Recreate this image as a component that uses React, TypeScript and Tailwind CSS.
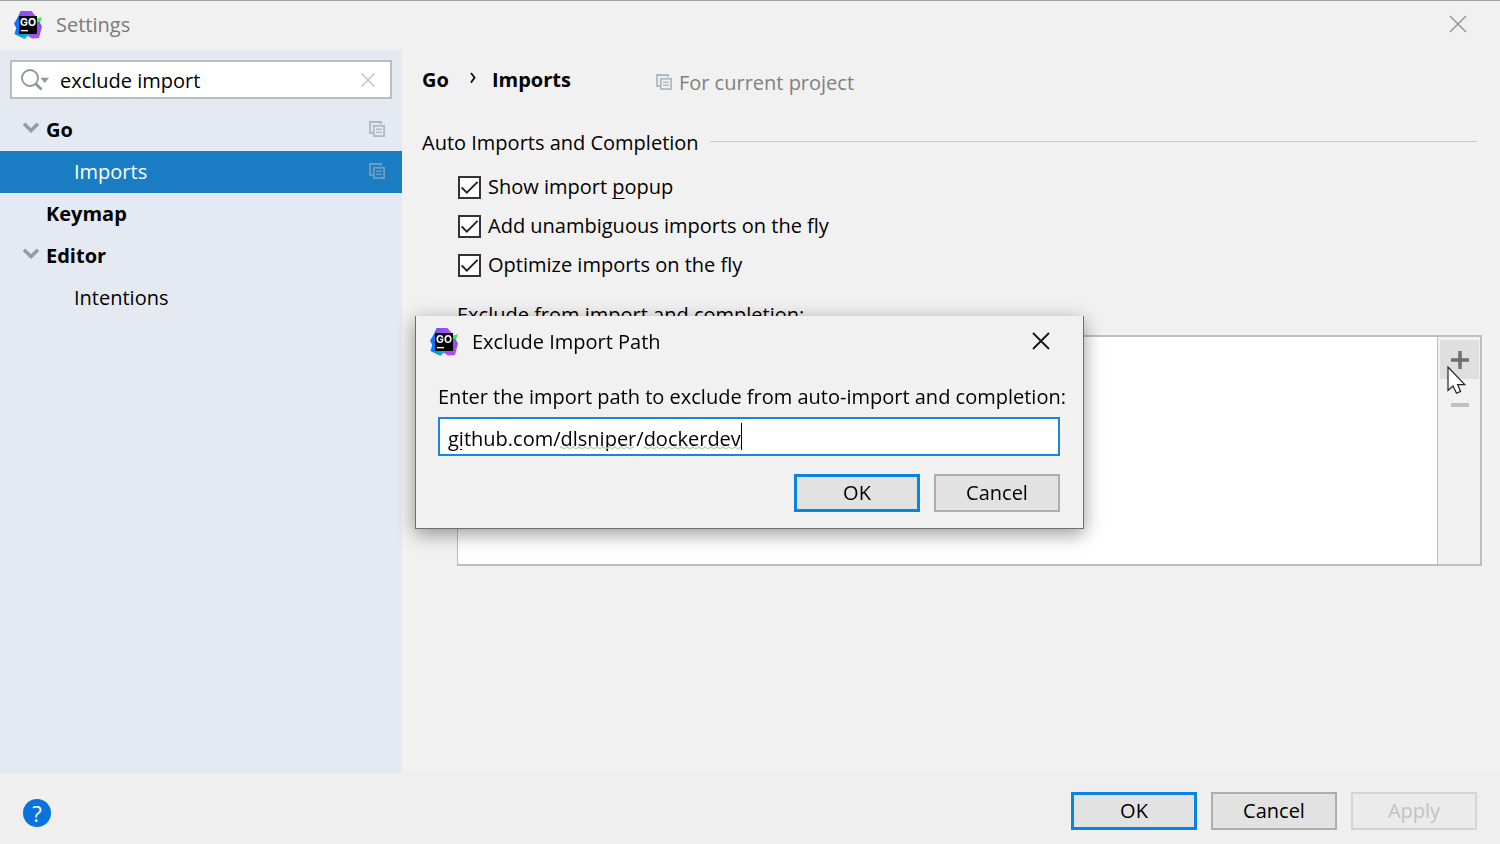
import { useState } from "react";
import type { ReactNode } from "react";

function GoLandLogo({ id }: { id: string }) {
  return (
    <svg width="28" height="28" viewBox="0 0 28 28" aria-hidden="true" className="shrink-0">
      <defs>
        <linearGradient id={`${id}-violet`} x1="0" y1="0" x2="1" y2="0.3">
          <stop offset="0" stopColor="#3b6bf5" />
          <stop offset="0.45" stopColor="#9a4bf8" />
          <stop offset="1" stopColor="#b94af5" />
        </linearGradient>
        <linearGradient id={`${id}-blue`} x1="0" y1="0" x2="0.8" y2="1">
          <stop offset="0" stopColor="#1b6cf8" />
          <stop offset="0.5" stopColor="#087cfa" />
          <stop offset="1" stopColor="#18c2b4" />
        </linearGradient>
        <linearGradient id={`${id}-right`} x1="0.5" y1="0" x2="0.5" y2="1">
          <stop offset="0" stopColor="#7a5ad8" />
          <stop offset="1" stopColor="#b74af7" />
        </linearGradient>
      </defs>
      <path d="M3 8 6.5 0H17.5L22 5.5 23 14 8 15Z" fill={`url(#${id}-violet)`} />
      <path d="M20 8.5 28 6 25.5 13 21 16Z" fill="#3bea62" />
      <path d="M22 11 25.5 11 28 15.5 25 27 18 27.5 11 23Z" fill={`url(#${id}-right)`} />
      <path d="M4 6 0 12.5 2.2 17 0.5 23 10.5 28 17 22 12 8Z" fill={`url(#${id}-blue)`} />
      <rect x="5" y="5" width="18" height="18" fill="#050505" />
      <rect x="7" y="19" width="7" height="1.3" fill="#fff" />
      <text x="6" y="14.8" fill="#fff" fontSize="10.5" fontWeight="700" fontFamily="Inter, sans-serif">
        GO
      </text>
    </svg>
  );
}

function ProjectIcon({ color }: { color: string }) {
  return (
    <svg width="16" height="16" viewBox="0 0 16 16" fill="none" stroke={color} aria-hidden="true" className="shrink-0">
      <path d="M12 3V1H1V12H4" strokeWidth="1.8" />
      <rect x="4.8" y="4.8" width="10.3" height="10.3" strokeWidth="1.8" />
      <path d="M7 8.3H12.8M7 11.3H12.8" strokeWidth="1.5" />
    </svg>
  );
}

function CloseIcon({ size, color, width }: { size: number; color: string; width: number }) {
  return (
    <svg width={size} height={size} viewBox="0 0 18 18" fill="none" stroke={color} strokeWidth={width} aria-hidden="true">
      <path d="M1 1 17 17M17 1 1 17" />
    </svg>
  );
}

function Chevron() {
  return (
    <svg width="16" height="12" viewBox="0 0 16 12" fill="none" stroke="#989ca0" strokeWidth="3.6" aria-hidden="true">
      <path d="M1 1.8 8 8.6 15 1.8" />
    </svg>
  );
}

function TreeRow({
  label,
  group = false,
  open = false,
  selected = false,
  project = false,
}: {
  label: string;
  group?: boolean;
  open?: boolean;
  selected?: boolean;
  project?: boolean;
}) {
  return (
    <li>
      <button
        type="button"
        className={`flex h-[42px] w-full items-center pr-[17px] text-left ${selected ? "bg-[#1a7dc4] text-white" : "text-black"}`}
      >
        <span className={`flex shrink-0 items-center pb-1 pl-[23px] ${group ? "w-[46px]" : "w-[74px]"}`}>
          {open && <Chevron />}
        </span>
        <span className={`flex-1 ${group ? "font-bold" : ""}`}>{label}</span>
        {project && (
          <span className="pb-[2px]">
            <ProjectIcon color={selected ? "#6f9fc0" : "#b0bac4"} />
          </span>
        )}
      </button>
    </li>
  );
}

function CheckRow({ id, children }: { id: string; children: ReactNode }) {
  const [checked, setChecked] = useState(true);
  return (
    <div className="flex h-7 items-center gap-[7px]">
      <span className="relative flex">
        <input
          id={id}
          type="checkbox"
          checked={checked}
          onChange={(e) => setChecked(e.target.checked)}
          className="size-[23px] appearance-none border-2 border-[#333] bg-white"
        />
        {checked && (
          <svg
            width="23"
            height="23"
            viewBox="0 0 23 23"
            fill="none"
            stroke="#222"
            strokeWidth="1.9"
            aria-hidden="true"
            className="pointer-events-none absolute inset-0"
          >
            <path d="M3.6 11.4 8.8 16.6 19.6 5.8" />
          </svg>
        )}
      </span>
      <label htmlFor={id}>{children}</label>
    </div>
  );
}

function DialogButton({ label, kind = "normal" }: { label: string; kind?: "primary" | "normal" | "disabled" }) {
  const styles = {
    primary: "border-[3px] border-[#0a84e2] bg-[#e2e2e2] text-black",
    normal: "border-2 border-[#adadad] bg-[#e2e2e2] text-black",
    disabled: "border-2 border-[#d4d4d4] bg-[#ebebeb] text-[#c2c2c2]",
  };
  return (
    <button
      type="button"
      disabled={kind === "disabled"}
      className={`flex h-[38px] w-[126px] items-center justify-center ${styles[kind]}`}
    >
      {label}
    </button>
  );
}

function ExcludeDialog() {
  return (
    <div className="fixed inset-0 flex items-center justify-center pt-px pr-px">
      <div
        role="dialog"
        aria-labelledby="exclude-title"
        className="w-[669px] border border-t-0 border-[#6e6e6e] bg-[#f1f1f1] pb-4 shadow-[0_5px_18px_rgba(0,0,0,0.4)]"
      >
        <div className="flex h-[52px] items-center gap-[14px] pr-[33px] pl-[14px]">
          <GoLandLogo id="dialog-logo" />
          <h2 id="exclude-title" className="flex-1">
            Exclude Import Path
          </h2>
          <button type="button" aria-label="Close dialog" className="pb-[2px]">
            <CloseIcon size={18} color="#111" width={1.8} />
          </button>
        </div>
        <div className="pt-[15px] pr-[23px] pl-[22px]">
          <label htmlFor="import-path" className="block h-[30px] whitespace-nowrap">
            Enter the import path to exclude from auto-import and completion:
          </label>
          <div className="relative mt-1 flex">
            <input
              id="import-path"
              type="text"
              spellCheck={false}
              defaultValue="github.com/dlsniper/dockerdev"
              className="h-[39px] w-full border-2 border-[#1a85dc] bg-white px-2 pt-1 outline-none"
            />
            <svg
              width="310"
              height="39"
              viewBox="0 0 310 39"
              fill="none"
              aria-hidden="true"
              className="pointer-events-none absolute top-0 left-0"
            >
              <defs>
                <pattern id="typo-wave" width="6" height="4" patternUnits="userSpaceOnUse" x="0" y="29">
                  <path d="M0 3 3 0.8 6 3" stroke="#b5d6b0" strokeWidth="1.2" fill="none" />
                </pattern>
              </defs>
              <rect x="122" y="29" width="74" height="4" fill="url(#typo-wave)" />
              <rect x="205" y="29" width="98" height="4" fill="url(#typo-wave)" />
              <rect x="22" y="32" width="2" height="1" fill="#000" />
              <rect x="303" y="6" width="1" height="27" fill="#000" />
            </svg>
          </div>
          <div className="mt-[18px] flex justify-end gap-[14px]">
            <DialogButton label="OK" kind="primary" />
            <DialogButton label="Cancel" />
          </div>
        </div>
      </div>
    </div>
  );
}

export default function App() {
  return (
    <div className="flex min-h-screen flex-col border-t border-[#a0a0a0] bg-[#f1f1f1] font-['Open_Sans','Noto_Sans',sans-serif] text-[20px] leading-[28px] text-black">
      <header className="flex h-[49px] shrink-0 items-center gap-[14px] pr-[33px] pb-px pl-[14px]">
        <GoLandLogo id="window-logo" />
        <h1 className="flex-1 text-[#7a7a7a]">Settings</h1>
        <button type="button" aria-label="Close settings" className="pb-[2px]">
          <CloseIcon size={18} color="#999" width={1.6} />
        </button>
      </header>

      <div className="flex flex-1">
        <nav className="w-[402px] shrink-0 bg-[#e5eaf2]" aria-label="Settings categories">
          <div className="px-[10px] pt-[10px] pb-[10px]">
            <div className="flex h-[39px] items-center border-2 border-[#bcbebd] bg-white pr-[15px] pl-2">
              <svg width="30" height="24" viewBox="0 0 30 24" fill="none" aria-hidden="true" className="shrink-0">
                <circle cx="10" cy="10" r="8" stroke="#8a959c" strokeWidth="1.8" />
                <path d="M15.5 15.5 21.5 21.5" stroke="#8a959c" strokeWidth="2.6" />
                <path d="M20.5 9.8H29L24.7 15Z" fill="#8a959c" />
              </svg>
              <input
                type="text"
                aria-label="Search settings"
                defaultValue="exclude import"
                className="min-w-0 flex-1 bg-transparent pt-[2px] pl-[10px] outline-none"
              />
              <button type="button" aria-label="Clear search">
                <CloseIcon size={14} color="#c0c4c7" width={2} />
              </button>
            </div>
          </div>
          <ul>
            <TreeRow label="Go" group open project />
            <TreeRow label="Imports" selected project />
            <TreeRow label="Keymap" group />
            <TreeRow label="Editor" group open />
            <TreeRow label="Intentions" />
          </ul>
        </nav>

        <main className="min-w-0 flex-1 pt-[10px] pr-[18px] pl-5">
          <div className="flex h-10 items-center font-bold">
            <span>Go</span>
            <svg width="6" height="12" viewBox="0 0 6 12" fill="none" stroke="#111" strokeWidth="1.8" aria-hidden="true" className="mr-4 mb-1 ml-[21px]">
              <path d="M1 1 4.6 5.6 1 10.6" />
            </svg>
            <span>Imports</span>
            <span className="ml-[85px] flex items-center gap-[7px] pt-[6px] font-normal text-[#808080]">
              <span className="pb-[2px]">
                <ProjectIcon color="#b0bac0" />
              </span>
              For current project
            </span>
          </div>

          <section>
            <div className="mt-7 flex h-[30px] items-center gap-[11px] pr-[5px]">
              <h2>Auto Imports and Completion</h2>
              <hr className="mb-[3px] flex-1 border-[#cacaca]" />
            </div>
            <div className="mt-[15px] flex flex-col gap-[11px] pl-9">
              <CheckRow id="show-popup">
                Show import <span className="underline decoration-1 underline-offset-4 [text-decoration-skip-ink:none]">p</span>opup
              </CheckRow>
              <CheckRow id="add-unambiguous">Add unambiguous imports on the fly</CheckRow>
              <CheckRow id="optimize">Optimize imports on the fly</CheckRow>
            </div>
            <div className="mt-[22px] pl-[35px]">
              <h3 className="h-[30px]">Exclude from import and completion:</h3>
              <div className="mt-1 flex h-[231px] border-2 border-l border-[#bebebe] bg-white">
                <div className="flex-1" />
                <div className="flex w-[43px] flex-col items-center border-l border-[#bebebe] bg-[#f1f1f1] pt-[3px]">
                  <button type="button" aria-label="Add path" className="relative flex size-[39px] items-center justify-center bg-[#dfdfdf] pl-px">
                    <svg width="18" height="18" viewBox="0 0 18 18" aria-hidden="true">
                      <path d="M7.3 0h3.4v7.3H18v3.4h-7.3V18H7.3v-7.3H0V7.3h7.3z" fill="#6e6e6e" />
                    </svg>
                    <svg width="20" height="29" viewBox="0 0 20 29" aria-hidden="true" className="pointer-events-none absolute top-[26px] left-[7px]">
                      <path
                        d="M1 1V24.5L6 20 9.5 27.2 13.6 25.4 10.6 18.6H17.8Z"
                        fill="#fff"
                        stroke="#222"
                        strokeWidth="1.2"
                      />
                    </svg>
                  </button>
                  <button type="button" aria-label="Remove path" disabled className="flex h-[52px] w-[39px] items-center justify-center pl-px">
                    <svg width="18" height="4" viewBox="0 0 18 4" aria-hidden="true">
                      <rect width="18" height="4" fill="#c0c0c0" />
                    </svg>
                  </button>
                </div>
              </div>
            </div>
          </section>
        </main>
      </div>

      <footer className="flex h-[71px] shrink-0 items-center bg-[#efefef] pt-1 pr-[23px] pb-0 pl-[23px]">
        <button
          type="button"
          aria-label="Help"
          className="mt-1 flex size-7 items-center justify-center rounded-full bg-[#0873dc] text-[22px] text-white"
        >
          ?
        </button>
        <div className="ml-auto flex gap-[14px]">
          <DialogButton label="OK" kind="primary" />
          <DialogButton label="Cancel" />
          <DialogButton label="Apply" kind="disabled" />
        </div>
      </footer>

      <ExcludeDialog />
    </div>
  );
}
